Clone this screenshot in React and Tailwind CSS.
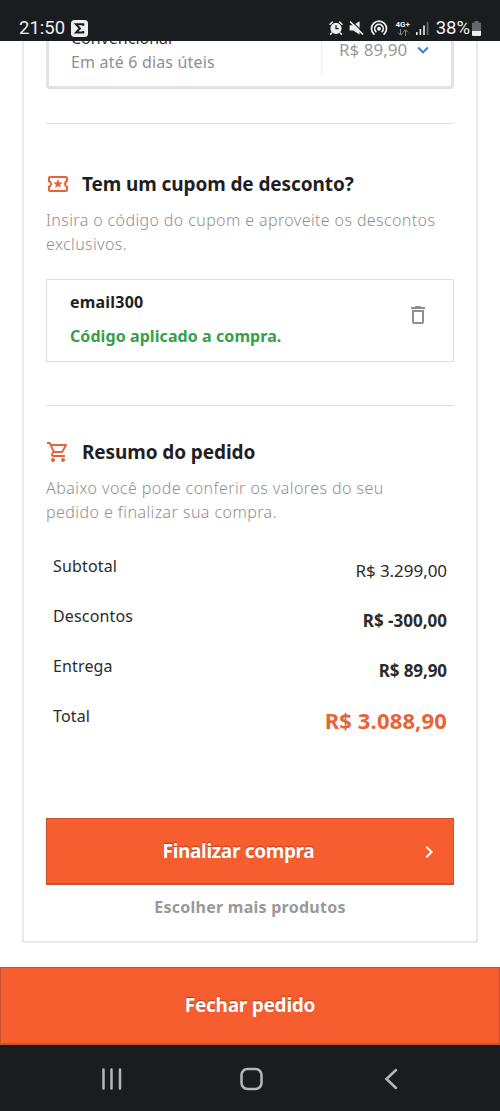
import {
    MdChevronRight,
    MdDeleteOutline,
    MdKeyboardArrowDown,
    MdOutlineLocalActivity,
    MdOutlineShoppingCart,
} from "react-icons/md";

const SUMMARY = [
    { label: "Subtotal", value: "R$ 3.299,00", valueClass: "mt-[5px] text-[17px] tracking-[-0.05px]" },
    { label: "Descontos", value: "R$ -300,00", valueClass: "mt-[5px] text-[17px] font-bold" },
    { label: "Entrega", value: "R$ 89,90", valueClass: "mt-[5px] text-[17px] font-bold tracking-[-0.1px]" },
    { label: "Total", value: "R$ 3.088,90", valueClass: "mt-1 text-[22px] font-bold tracking-[0.15px] text-[#e8633a]" },
];

function AlarmIcon() {
    return (
        <svg width="14" height="14" viewBox="0 0 14 14" fill="none">
            <path d="M1 3.2 3.4 1M13 3.2 10.6 1M2.6 12l-1 1.2M11.4 12l1 1.2" stroke="#eee" strokeWidth="1.5" strokeLinecap="round" />
            <circle cx="7" cy="7.4" r="5.6" fill="#eee" />
            <path d="M7 4.2v3.5h2.7" stroke="#191d20" strokeWidth="1.3" />
        </svg>
    );
}

function MuteIcon() {
    return (
        <svg width="15" height="14" viewBox="0 0 15 14" fill="none">
            <path d="M.6 4.2h3.6L10.6.2v13.4L4.2 9.6H.6z" fill="#eee" />
            <path d="m3 .4 12 12" stroke="#191d20" strokeWidth="1.2" />
            <path d="m1.5 1 12 12" stroke="#eee" strokeWidth="1.7" strokeLinecap="round" />
        </svg>
    );
}

function HotspotIcon() {
    return (
        <svg width="18" height="16" viewBox="0 0 18 16" fill="none" stroke="#eee" strokeWidth="1.7" strokeLinecap="round">
            <path d="M3.9 14.2a7.5 7.5 0 1 1 10.2 0" />
            <path d="M5.9 11.7a4.3 4.3 0 1 1 6.2 0" />
            <circle cx="9" cy="8.8" r="1.1" fill="#eee" />
        </svg>
    );
}

function NetworkIcon() {
    return (
        <div className="flex w-4 flex-col items-center">
            <span className="text-[8px] font-bold leading-[8px]">4G+</span>
            <svg width="12" height="7" viewBox="0 0 12 7" fill="none" stroke="#858789" strokeWidth="1">
                <path d="M3.5 0v6M1 3.7l2.5 2.5L6 3.7M8.5 7V1M6 3.3 8.5.8 11 3.3" />
            </svg>
        </div>
    );
}

function SignalIcon() {
    return (
        <svg width="13" height="13" viewBox="0 0 13 13" fill="#eee">
            <rect x="0" y="10" width="1.6" height="3" />
            <rect x="3.6" y="7" width="1.6" height="6" />
            <rect x="7.2" y="3.5" width="1.6" height="9.5" />
            <rect x="10.8" y="0" width="1.6" height="13" fill="#66696b" />
        </svg>
    );
}

function BatteryIcon() {
    return (
        <svg width="9" height="15" viewBox="0 0 9 15">
            <path d="M2.5 0h4v1.4H8A1 1 0 0 1 9 2.4V14a1 1 0 0 1-1 1H1a1 1 0 0 1-1-1V2.4a1 1 0 0 1 1-1h1.5z" fill="#66696b" />
            <path d="M0 10h9v4a1 1 0 0 1-1 1H1a1 1 0 0 1-1-1z" fill="#eee" />
        </svg>
    );
}

function StatusBar() {
    return (
        <header className="flex h-[41px] shrink-0 items-end justify-between bg-[#191d20] px-[19px] pb-[4px] font-['Roboto',sans-serif] text-[#eee]">
            <div className="flex items-center gap-[6px]">
                <span className="text-[18.5px] leading-[18px]">21:50</span>
                <svg width="17" height="17" viewBox="0 0 17 17" fill="none">
                    <rect width="17" height="17" rx="3.5" fill="#eee" />
                    <path d="M12.3 5.8V4.2H5l3.9 4.2L5 12.6h7.3V11" stroke="#191d20" strokeWidth="2" />
                </svg>
            </div>
            <div className="flex items-center">
                <AlarmIcon />
                <div className="ml-[6px]"><MuteIcon /></div>
                <div className="ml-[6px]"><HotspotIcon /></div>
                <div className="ml-[7px]"><NetworkIcon /></div>
                <div className="ml-[5px]"><SignalIcon /></div>
                <span className="ml-[7px] text-[18.5px] leading-[18px]">38%</span>
                <div className="ml-[2px]"><BatteryIcon /></div>
            </div>
        </header>
    );
}

function SectionTitle({ icon, children }) {
    return (
        <div className="flex h-6 items-center gap-3">
            {icon}
            <h2 className="text-[19px] font-bold tracking-[-0.1px] text-[#1f1f1f]">{children}</h2>
        </div>
    );
}

// Top of the card is scrolled under the status bar
function ShippingOption() {
    return (
        <div className="flex h-[48px] shrink-0 rounded-b-[4px] border-x-[3px] border-b-[3px] border-[#e1e2e4]">
            <div className="-mt-[15px] flex-1 pl-[22px]">
                <p className="text-[16px] leading-[24px] text-[#333]">Convencional</p>
                <p className="text-[16px] leading-[24px] tracking-[0.18px] text-[#8f8f8f]">Em até 6 dias úteis</p>
            </div>
            <div className="flex h-[34px] w-[130px] items-start border-l border-[#ececec] pl-[17px]">
                <span className="text-[17px] leading-[17px] text-[#999]">R$ 89,90</span>
                <MdKeyboardArrowDown className="-mt-[2px] ml-[5px] size-[22px] text-[#2f7de0]" />
            </div>
        </div>
    );
}

function CouponCard() {
    return (
        <div className="mt-[23px] flex h-[83px] items-start justify-between border border-[#dfdfdf] px-[23px] pt-[10px]">
            <div>
                <p className="text-[16px] font-bold leading-[24px] tracking-[0.2px] text-[#1f1f1f]">email300</p>
                <p className="mt-[10px] text-[16px] font-bold leading-[24px] tracking-[0.08px] text-[#359f49]">Código aplicado a compra.</p>
            </div>
            <MdDeleteOutline className="mt-[13px] size-[24px] text-[#8f8f8f]" />
        </div>
    );
}

function OrderSummary() {
    return (
        <dl className="mt-[30px] flex flex-col px-[7px] text-[#2b2b2b]">
            {SUMMARY.map(row => (
                <div key={row.label} className="flex h-[50px] items-start justify-between">
                    <dt className="text-[16px] leading-[24px] tracking-[0.15px]">{row.label}</dt>
                    <dd className={`leading-[24px] ${row.valueClass}`}>{row.value}</dd>
                </div>
            ))}
        </dl>
    );
}

function NavBar() {
    return (
        <nav className="flex h-[66px] shrink-0 items-center justify-center bg-[#191d20] pt-[2px]">
            <svg width="300" height="24" viewBox="0 0 300 24" fill="none" stroke="#b5b6b7" strokeWidth="2.5" strokeLinecap="round">
                <path d="M3.5 2.5v19M11.5 2.5v19M20 2.5v19" />
                <rect x="141.5" y="2" width="20" height="20" rx="6" />
                <path d="m296 3-9.5 9 9.5 9" />
            </svg>
        </nav>
    );
}

export default function App() {
    return (
        <div className="flex h-[1111px] w-[500px] flex-col overflow-hidden bg-white font-['Noto_Sans',sans-serif]">
            <StatusBar />
            <main className="h-[926px] shrink-0 overflow-hidden px-[22px]">
                <div className="flex h-[902px] flex-col border-x-2 border-b-2 border-[#e9e9e9] px-[22px]">
                    <ShippingOption />
                    <hr className="mt-[34px] mb-px border-t border-[#dfdfdf]" />

                    <section className="mt-[47px]">
                        <SectionTitle icon={<MdOutlineLocalActivity className="size-6 text-[#e8633a]" />}>
                            Tem um cupom de desconto?
                        </SectionTitle>
                        <p className="mt-[12px] text-[16px] font-light leading-[24px] tracking-[0.39px] whitespace-nowrap text-[#8f8f8f]">
                            Insira o código do cupom e aproveite os descontos
                            <br />
                            exclusivos.
                        </p>
                        <CouponCard />
                    </section>

                    <hr className="mt-[43px] border-t border-[#dfdfdf]" />

                    <section className="mt-[34px]">
                        <SectionTitle icon={<MdOutlineShoppingCart className="size-6 text-[#e8633a]" />}>
                            Resumo do pedido
                        </SectionTitle>
                        <p className="mt-[12px] text-[16px] font-light leading-[24px] tracking-[0.44px] whitespace-nowrap text-[#8f8f8f]">
                            Abaixo você pode conferir os valores do seu
                            <br />
                            pedido e finalizar sua compra.
                        </p>
                        <OrderSummary />
                    </section>

                    <button className="mt-[64px] flex h-[67px] shrink-0 items-center border border-b-2 border-[#c9532e] bg-[#f65e2f] pr-[12px] text-white">
                        <span className="ml-[13px] flex-1 text-center text-[19px] font-bold tracking-[-0.33px] text-shadow-[0_-1px_1px_#00000050]">
                            Finalizar compra
                        </span>
                        <MdChevronRight className="mt-px size-6" />
                    </button>
                    <a className="mt-[10px] text-center text-[16px] font-bold leading-[24px] tracking-[0.25px] text-[#999]">
                        Escolher mais produtos
                    </a>
                </div>
            </main>
            <button className="h-[78px] shrink-0 border border-b-2 border-[#c9532e] bg-[#f65e2f] text-[19px] font-bold tracking-[-0.25px] text-white text-shadow-[0_-1px_1px_#00000050]">
                Fechar pedido
            </button>
            <NavBar />
        </div>
    );
}
